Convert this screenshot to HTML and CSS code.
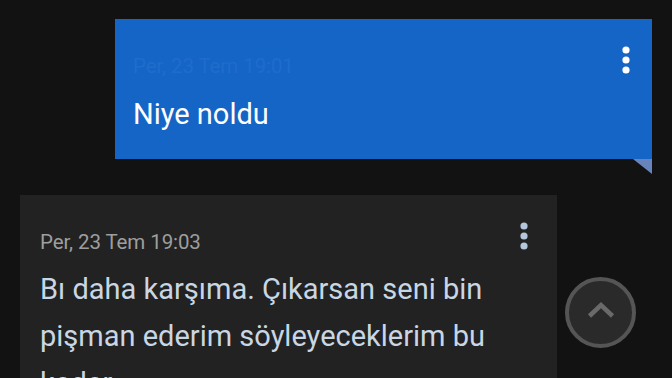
FILE: index.html
```html
<!DOCTYPE html>
<html lang="tr">
<head>
<meta charset="utf-8">
<link rel="stylesheet" href="styles.css">
</head>
<body>
<div class="screen">
  <div class="row row-out">
    <div class="bubble bubble-out">
      <div class="head">
        <span class="time time-out">Per, 23 Tem 19:01</span>
        <svg class="dots" width="8" height="28" viewBox="0 0 8 28"><circle cx="4" cy="4" r="3.6" fill="#fff"/><circle cx="4" cy="14" r="3.6" fill="#fff"/><circle cx="4" cy="24" r="3.6" fill="#fff"/></svg>
      </div>
      <div class="msg msg-out">Niye noldu</div>
      <span class="tail"></span>
    </div>
  </div>
  <div class="row row-in">
    <div class="bubble bubble-in">
      <div class="head">
        <span class="time time-in">Per, 23 Tem 19:03</span>
        <svg class="dots" width="8" height="28" viewBox="0 0 8 28"><circle cx="4" cy="4" r="3.6" fill="#b3c6da"/><circle cx="4" cy="14" r="3.6" fill="#b3c6da"/><circle cx="4" cy="24" r="3.6" fill="#b3c6da"/></svg>
      </div>
      <div class="msg msg-in">Bı daha karşıma. Çıkarsan seni bin pişman ederim söyleyeceklerim bu kadar</div>
    </div>
  </div>
  <button class="top-btn" aria-label="Yukarı">
    <svg width="30" height="20" viewBox="0 0 30 20"><path d="M3.5 16 L15 5 L26.5 16" fill="none" stroke="#6a6a6a" stroke-width="4.5"/></svg>
  </button>
</div>
</body>
</html>
```
FILE: styles.css
```css
html, body {
  margin: 0;
  padding: 0;
  background: #121212;
}
.screen {
  position: relative;
  width: 672px;
  height: 378px;
  overflow: hidden;
  background: #121212;
  font-family: Roboto, "Noto Sans", sans-serif;
}
.row {
  display: flex;
}
.row-out {
  justify-content: flex-end;
  padding: 19px 20px 0 0;
}
.row-in {
  padding: 36px 0 0 20px;
}
.bubble {
  position: relative;
  box-sizing: border-box;
}
.bubble-out {
  width: 537px;
  height: 140px;
  background: #1565c6;
  padding: 27px 22px 0 18px;
}
.bubble-in {
  width: 537px;
  height: 200px;
  background: #222222;
  padding: 27px 29px 0 20px;
}
.head {
  display: flex;
  justify-content: space-between;
  align-items: flex-start;
}
.time {
  font-size: 20.5px;
  line-height: 24px;
  margin-top: 8px;
  letter-spacing: -0.1px;
}
.time-out {
  color: #1f6ccc;
}
.time-in {
  color: #9e9e9e;
}
.dots {
  display: block;
}
.msg-out {
  color: #ffffff;
  font-size: 29px;
  line-height: 34px;
  margin-top: 19px;
}
.msg-in {
  color: #c9d6e3;
  font-size: 29px;
  line-height: 47px;
  margin-top: 12px;
}
.tail {
  position: absolute;
  right: 0;
  bottom: -15px;
  width: 0;
  height: 0;
  border-top: 15px solid #6784bd;
  border-left: 19px solid transparent;
}
.top-btn {
  position: absolute;
  left: 565px;
  top: 277px;
  width: 71px;
  height: 71px;
  box-sizing: border-box;
  border-radius: 50%;
  border: 4px solid #555555;
  background: #2a2a2a;
  padding: 0;
  display: flex;
  align-items: center;
  justify-content: center;
}
.top-btn svg {
  margin-top: -5px;
}
```
